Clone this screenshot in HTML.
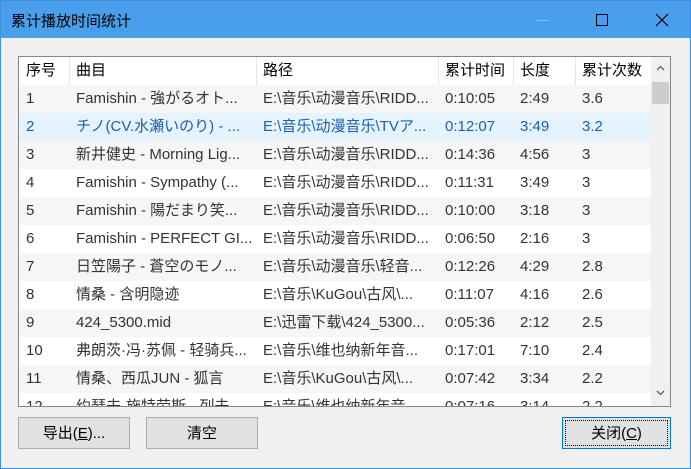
<!DOCTYPE html><html><head><style>
body{margin:0;width:691px;height:469px;overflow:hidden;font-family:"Liberation Sans","Noto Sans CJK SC",sans-serif;font-size:15px;color:#333}
.win{position:absolute;left:0;top:0;width:689px;height:467px;border:1px solid #3c8ee0;background:#f0f0f0}
.title{position:absolute;left:0;top:0;width:689px;height:37px;background:#4a9fec;color:#000}
.title span{position:absolute;left:10px;top:9px;font-size:15px}
.list{position:absolute;left:17px;top:55px;width:651px;height:349px;border:1px solid #828790;background:#fff;overflow:hidden}
.row{position:absolute;left:0;height:28px;width:632px;line-height:28px;white-space:nowrap}
.row div{position:absolute;top:0;overflow:hidden}
.hdr{background:#fff;color:#000}
.hdr div{border-right:1px solid #e5e5e5;height:28px}
.sb{position:absolute;left:632px;top:0;width:19px;height:349px;background:#f0f0f0}
.btn{position:absolute;top:416px;height:32px;border:1px solid #adadad;background:#e1e1e1;text-align:center;line-height:32px;color:#000;box-sizing:border-box}
</style></head><body><div class="win">
<div class="title"><span>累计播放时间统计</span>
<div style="position:absolute;left:536px;top:19px;width:11px;height:1px;background:#8cc0f0"></div>
<div style="position:absolute;left:595px;top:13px;width:10px;height:10px;border:1px solid #000"></div>
<svg style="position:absolute;left:654px;top:12px" width="14" height="14"><path d="M1 1L13 13M13 1L1 13" stroke="#000" stroke-width="1.2"/></svg>
</div>
<div class="list" id="l"></div>
<div class="btn" style="left:17px;width:112px">导出(<u>E</u>)...</div>
<div class="btn" style="left:145px;width:112px">清空</div>
<div class="btn" style="left:561px;width:109px;border:1px solid #0078d7;outline:1px dotted #000;outline-offset:-4px">关闭(<u>C</u>)</div>
</div>
<script>
var d=[["序号","曲目","路径","累计时间","长度","累计次数"],
["1","Famishin - 強がるオト...","E:\\音乐\\动漫音乐\\RIDD...","0:10:05","2:49","3.6"],
["2","チノ(CV.水瀬いのり) - ...","E:\\音乐\\动漫音乐\\TVア...","0:12:07","3:49","3.2"],
["3","新井健史 - Morning Lig...","E:\\音乐\\动漫音乐\\RIDD...","0:14:36","4:56","3"],
["4","Famishin - Sympathy (...","E:\\音乐\\动漫音乐\\RIDD...","0:11:31","3:49","3"],
["5","Famishin - 陽だまり笑...","E:\\音乐\\动漫音乐\\RIDD...","0:10:00","3:18","3"],
["6","Famishin - PERFECT GI...","E:\\音乐\\动漫音乐\\RIDD...","0:06:50","2:16","3"],
["7","日笠陽子 - 蒼空のモノ...","E:\\音乐\\动漫音乐\\轻音...","0:12:26","4:29","2.8"],
["8","情桑 - 含明隐迹","E:\\音乐\\KuGou\\古风\\...","0:11:07","4:16","2.6"],
["9","424_5300.mid","E:\\迅雷下载\\424_5300...","0:05:36","2:12","2.5"],
["10","弗朗茨·冯·苏佩 - 轻骑兵...","E:\\音乐\\维也纳新年音...","0:17:01","7:10","2.4"],
["11","情桑、西瓜JUN - 狐言","E:\\音乐\\KuGou\\古风\\...","0:07:42","3:34","2.2"],
["12","约瑟夫·施特劳斯 - 列夫...","E:\\音乐\\维也纳新年音...","0:07:16","3:14","2.2"]];
var x=[0,50,237,419,494,556],w=[50,187,182,75,62,76],h="";
d.forEach(function(r,i){var cls="row",st="top:"+(i*28)+"px;";
if(i==0)cls+=" hdr";else if(i==2)st+="background:#e5f3ff;color:#1c5fb0;";else if(i%2)st+="background:#f6f6f6;";
h+='<div class="'+cls+'" style="'+st+'">';r.forEach(function(c,j){h+='<div style="left:'+x[j]+'px;width:'+(w[j]-7)+'px;padding-left:7px">'+c+'</div>'});h+='</div>'});
h+='<div class="sb"><div style="position:absolute;left:1px;top:25px;width:17px;height:22px;background:#cdcdcd"></div><svg style="position:absolute;left:5px;top:8px" width="9" height="6"><path d="M1 5L4.5 1.5L8 5" stroke="#606060" fill="none" stroke-width="1.3"/></svg><svg style="position:absolute;left:5px;top:333px" width="9" height="6"><path d="M1 1L4.5 4.5L8 1" stroke="#606060" fill="none" stroke-width="1.3"/></svg></div>';
document.getElementById("l").innerHTML=h;
</script></body></html>
